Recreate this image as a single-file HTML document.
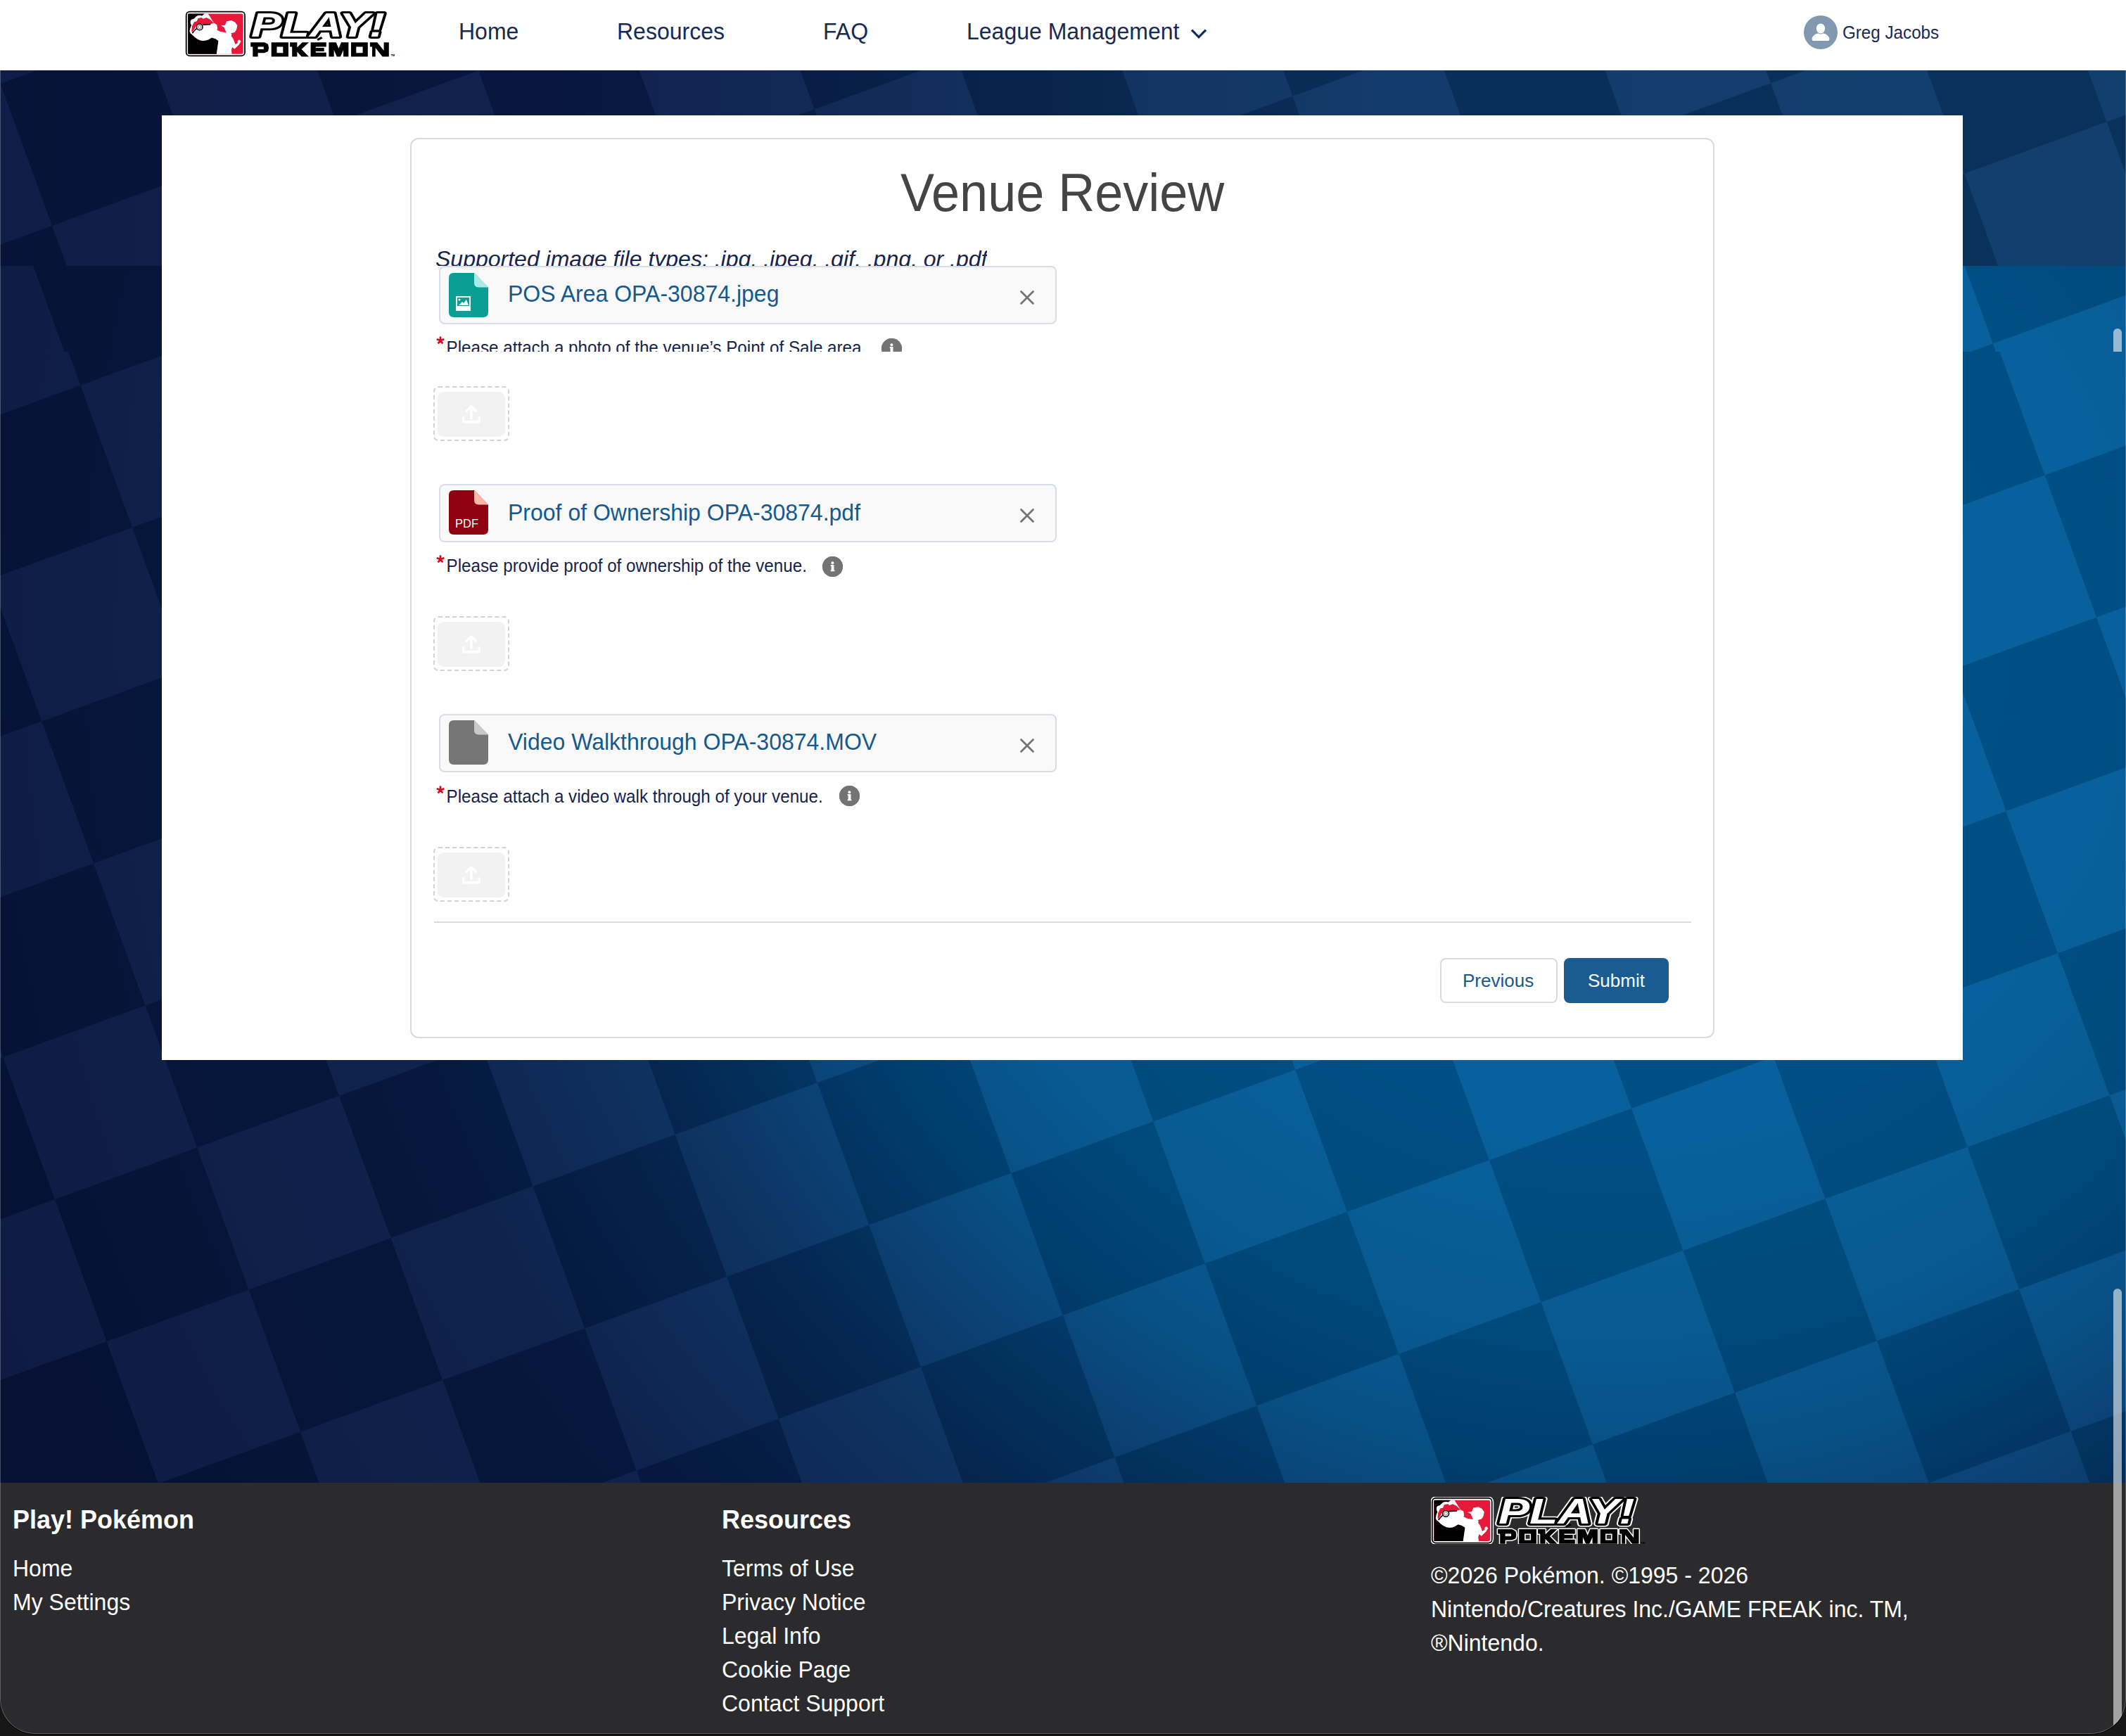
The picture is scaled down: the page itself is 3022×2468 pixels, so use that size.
<!DOCTYPE html>
<html><head><meta charset="utf-8">
<style>
*{margin:0;padding:0;box-sizing:border-box}
html,body{width:3022px;height:2468px;overflow:hidden;background:#171717}
body{position:relative;font-family:"Liberation Sans",sans-serif}
.abs{position:absolute}
#win{position:absolute;left:0;top:0;width:3022px;height:2465px;overflow:hidden;border-radius:0 0 50px 50px;background:#2b2b2d;box-shadow:0 1px 0 0 #000}
#hdr{position:absolute;left:0;top:0;width:3022px;height:100px;background:#fff}
.nav{position:absolute;top:21.3px;font-size:32px;color:#182a56;white-space:nowrap;line-height:48px}
#bgA{position:absolute;left:0;top:100px;width:3022px;height:278px;overflow:hidden;background:linear-gradient(90deg,#081640 0%,#0a1c4a 30%,#0b2b5a 50%,#0b3566 65%,#0a3a69 100%)}
#bgB{position:absolute;left:0;top:500px;width:3022px;height:1608px;overflow:hidden;background:radial-gradient(circle at 2300px 400px,#005d9b 0px,#005c9a 700px,#00558f 1000px,#00487f 1200px,#033e73 1300px,#062c5c 1500px,#071c48 1800px,#07143c 2500px)}
#bgC{position:absolute;left:0;top:378px;width:3022px;height:122px;overflow:hidden;background:radial-gradient(circle at 2300px 522px,#005d9b 0px,#005c9a 700px,#00558f 1000px,#00487f 1200px,#033e73 1300px,#062c5c 1500px,#071c48 1800px,#07143c 2500px)}
.chk{position:absolute;width:7310px;height:7310px;transform:rotate(-20deg);transform-origin:50% 50%;background-size:430px 430px;background-position:0 0}
.chk.p0{background-image:repeating-conic-gradient(rgba(255,255,255,.03) 0 25%,rgba(0,0,0,.14) 0 50%)}
.chk.p1{background-image:repeating-conic-gradient(rgba(0,0,0,.14) 0 25%,rgba(255,255,255,.03) 0 50%)}
#panel{position:absolute;left:230px;top:164px;width:2560px;height:1343px;background:#fff}
#card{position:absolute;left:583px;top:196px;width:1854px;height:1280px;border:2px solid #dddbda;border-radius:12px;background:#fff}
.t{position:absolute;white-space:nowrap;line-height:1}
.pill{position:absolute;left:624px;width:878px;height:83px;background:#f9f9f9;border:2px solid #d8dde6;border-radius:8px}
.fname{position:absolute;left:722px;font-size:32px;color:#16598f;white-space:nowrap;line-height:1}
.lbl{position:absolute;left:637px;font-size:24.2px;color:#16234d;white-space:nowrap;line-height:1}
.ast{position:absolute;left:620px;font-size:26px;color:#e3001b;line-height:1}
.info{position:absolute;width:29px;height:29px;border-radius:50%;background:#706e6b}
.up{position:absolute;left:616px;width:108px;height:78px;border:2px dashed #d6d2d0;border-radius:7px}
.up .in{position:absolute;left:4px;top:6px;width:96px;height:64px;background:#f2f2f2;border-radius:9px}
#foot{position:absolute;left:0;top:2108px;width:3022px;height:360px;background:#2b2b2d;color:#fff}
.fl{position:absolute;font-size:32px;color:#fff;white-space:nowrap;line-height:1}
.fname{transform:scaleY(1.05);transform-origin:0 29px}
.lbl{transform:scaleY(1.05);transform-origin:0 22px}
.nav{transform:scaleY(1.05);transform-origin:0 34.6px}
.fl{transform:scaleY(1.04);transform-origin:0 29px}
</style></head><body>
<div id="win">
  <div id="bgB"><div class="chk p0" style="left:-3577.4px;top:-2450.4px"></div></div>
  <div id="bgC"><div class="chk p0" style="left:-3577.4px;top:-2312.9px"></div></div>
  <div id="bgA"><div class="chk p1" style="left:-3581px;top:-3434px"></div></div>
  <div id="hdr">
    <svg class="abs" style="left:263px;top:15px" width="300" height="66" viewBox="0 0 300 66"><rect x="0.8" y="0.8" width="85.1" height="64.4" rx="6" fill="#000"/>
<rect x="2.6" y="2.6" width="81.6" height="60.8" rx="4" fill="#fff"/>
<rect x="4.2" y="4.6" width="78.4" height="57.2" rx="3" fill="#e8183a"/>
<polygon points="4.2,4.6 27.8,4.6 23.8,7.7 22.0,6.8 18.5,7.1 15.8,8.6 12.6,11.7 8.8,13.1 7.7,15.8 7.9,18.5 9.1,21.1 7.3,25.6 6.6,29.6 7.7,32.3 10.4,34.5 14.0,38.1 18.0,40.8 22.0,42.4 25.6,43.0 29.6,42.6 33.6,41.2 37.7,38.6 43.0,39.9 47.5,43.0 44.8,61.8 4.2,61.8" fill="#000"/>
<polygon points="27.8,4.6 32.8,4.6 41.0,17.6 45.3,20.2 46.2,25.6 45.5,27.8 50.6,30.1 58.7,31.4 56.4,26.0 55.5,23.8 51.1,21.4 56.9,20.7 59.1,15.3 66.3,14.0 71.2,16.7 74.3,21.1 73.4,26.0 72.5,28.3 70.3,31.0 65.4,32.3 66.3,34.1 65.8,36.3 68.5,39.9 71.6,47.9 74.8,46.2 74.8,43.0 77.0,41.2 79.7,43.5 76.5,48.8 70.3,54.7 67.2,52.0 65.8,56.4 66.7,61.8 44.8,61.8 47.5,43.0 43.0,39.9 37.7,38.6 33.6,41.2 29.6,42.6 25.6,43.0 22.0,42.4 18.0,40.8 14.0,38.1 10.4,34.5 7.7,32.3 6.6,29.6 7.3,25.6 9.1,21.1 7.9,18.5 7.7,15.8 8.8,13.1 12.6,11.7 15.8,8.6 18.5,7.1 22.0,6.8 23.8,7.7" fill="#fff"/>
<polygon points="9.3,29.6 10.0,22.0 13.1,16.2 16.7,15.3 18.5,10.9 23.8,10.0 25.6,11.7 30.5,10.0 35.4,12.6 41.0,17.6 36.3,19.3 25.6,19.8 20.2,18.5 15.8,22.0 10.4,31.0" fill="#e8183a"/>
<path d="M10.4 32.3Q14.0 27.4 17.1 25.2" stroke="#000" stroke-width="1.6" fill="none"/>
<path d="M24.7 20.2L36.3 19.6" stroke="#000" stroke-width="1.6" fill="none"/>
<circle cx="20.7" cy="23.4" r="4.3" fill="#fff" stroke="#000" stroke-width="1.5"/>
<circle cx="20.7" cy="23.4" r="2.2" fill="none" stroke="#000" stroke-width="0.5"/>
<path class="pok" d="M93.2 45.2 L112.9 45.2 L118.0 47.8 L119.1 52.9 L118.0 58.1 L112.9 60.2 L103.6 60.2 L103.6 65.4 L96.3 65.4 L96.3 51.4 L93.2 51.4Z M122.7 45.2 L147.0 45.2 L147.0 65.4 L122.7 65.4Z M149.1 45.2 L159.4 45.2 L159.4 52.4 L166.7 45.2 L176.0 45.2 L165.6 55.0 L176.0 65.4 L165.6 65.4 L159.4 58.6 L159.4 65.4 L152.2 65.4 L152.2 51.4 L149.1 51.4Z M178.6 45.2 L200.8 45.2 L200.8 51.4 L185.8 51.4 L185.8 52.9 L197.7 52.9 L197.7 58.1 L185.8 58.1 L185.8 59.7 L200.8 59.7 L200.8 65.4 L178.6 65.4Z M204.4 45.2 L214.8 45.2 L218.4 54.0 L222.0 45.2 L232.4 45.2 L232.4 65.4 L225.1 65.4 L225.1 56.1 L221.0 65.4 L215.8 65.4 L211.7 56.1 L211.7 65.4 L204.4 65.4Z M236.0 45.2 L259.8 45.2 L259.8 65.4 L236.0 65.4Z M262.9 45.2 L273.3 45.2 L282.6 57.1 L282.6 45.2 L289.8 45.2 L289.8 65.4 L280.5 65.4 L270.7 52.9 L270.7 65.4 L266.0 65.4 L266.0 51.4 L262.9 51.4Z M103.6 51.4 L111.8 51.4 L111.8 55.0 L103.6 55.0Z M130.5 51.4 L139.3 51.4 L139.3 60.2 L130.5 60.2Z M243.3 51.4 L252.6 51.4 L252.6 60.2 L243.3 60.2Z" fill="#000" fill-rule="evenodd"/>
<polygon points="187.4,40.5 193.6,36.9 195.7,39.5 188.9,43.1" fill="#000"/>
<text x="292.4" y="65.4" font-family="Liberation Sans" font-weight="bold" font-size="4" fill="#000">TM</text>
<text x="94" y="37" font-family="Liberation Sans" font-weight="bold" font-style="italic" font-size="48.5" textLength="190" lengthAdjust="spacingAndGlyphs" fill="#fff" stroke="#000" stroke-width="6" stroke-linejoin="round" paint-order="stroke">PLAY!</text></svg>
    <div class="nav" style="left:652px">Home</div>
    <div class="nav" style="left:877px">Resources</div>
    <div class="nav" style="left:1170px">FAQ</div>
    <div class="nav" style="left:1374px">League Management</div>
    <svg class="abs" style="left:1690px;top:38px" width="28" height="20" viewBox="0 0 28 20"><path d="M4 4.7L14 14.8L24 4.7" stroke="#16285a" stroke-width="3.2" fill="none"/></svg>
    <svg class="abs" style="left:2564px;top:22px" width="48" height="48" viewBox="0 0 48 48"><circle cx="24" cy="24" r="24" fill="#8298b0"/><ellipse cx="24" cy="18.5" rx="6.2" ry="7" fill="#fff"/><path d="M11.6 34Q11.6 29 17 26.5Q20 25 21 25.5Q24 27.5 27 25.5Q28 25 31 26.5Q36.4 29 36.4 34Q36.4 36 34.4 36H13.6Q11.6 36 11.6 34Z" fill="#fff"/></svg>
    <div class="nav" style="left:2619px;top:23px;font-size:24.2px">Greg Jacobs</div>
  </div>
  <div id="panel"></div>
  <div id="card"></div>
  <div class="t" style="left:1280px;top:238.5px;font-size:72px;color:#444;transform:scaleY(1.06);transform-origin:0 62px">Venue Review</div>
  
  <div class="t" style="left:619px;top:350px;height:28px;overflow:hidden;font-size:32px;font-style:italic;color:#16234d;line-height:36px">Supported image file types: .jpg, .jpeg, .gif, .png, or .pdf</div>

  <div class="pill" style="top:378px"></div>
  <svg class="abs" style="left:638px;top:388px" width="56" height="63" viewBox="0 0 56 63"><path d="M7 0H36L56 20.5V56Q56 63 49 63H7Q0 63 0 56V7Q0 0 7 0Z" fill="#0b9e94"/><path d="M36 0L56 20.5H42.5Q36 20.5 36 14Z" fill="#a8ede3"/><rect x="10" y="33" width="21" height="21" fill="#fff"/><rect x="12" y="35" width="17" height="12" fill="#0b9e94"/><circle cx="15" cy="38" r="1.5" fill="#fff"/><path d="M14 46L19 41L21 43L25 38L28 46Z" fill="#fff"/></svg>
  <div class="fname" style="top:402px">POS Area OPA-30874.jpeg</div>
  <svg class="abs" style="left:1448px;top:411px" width="24" height="24" viewBox="0 0 24 24"><path d="M3.5 3.5L20.5 20.5M20.5 3.5L3.5 20.5" stroke="#747474" stroke-width="2.8" stroke-linecap="round"/></svg>
  <div class="abs" style="left:600px;top:470px;width:800px;height:30px;overflow:hidden">
    <svg class="abs" style="left:19.0px;top:7.2px" width="14" height="14" viewBox="-7 -7 14 14"><path d="M0 0V-5.6M0 0L5.3 -1.7M0 0L3.3 4.5M0 0L-3.3 4.5M0 0L-5.3 -1.7" stroke="#e3001b" stroke-width="2.6"/></svg>
    <div class="lbl" style="left:34.6px;top:13px">Please attach a photo of the venue’s Point of Sale area</div>
    <div class="info" style="left:653px;top:11px"><svg width="29" height="29" viewBox="0 0 29 29" style="display:block"><circle cx="14.5" cy="14.5" r="14.5" fill="#737373"/><circle cx="14.4" cy="9.2" r="2" fill="#fff"/><path d="M11.8 12H16.5V19.3H17.3V21.2H11.8V19.3H12.6V14H11.8Z" fill="#fff"/></svg></div>
  </div>
  <div class="up" style="top:549px"><div class="in"><svg class="abs" style="left:0;top:0" width="96" height="64" viewBox="0 0 96 64"><path d="M36.7 36.7V42.7H59.1V36.7M47.9 37.6V21M41 27.6L47.9 21L54.8 27.6" stroke="#fff" stroke-width="3.4" fill="none" stroke-linecap="round" stroke-linejoin="round"/></svg></div></div>

  <div class="pill" style="top:688px"></div>
  <svg class="abs" style="left:638px;top:697px" width="56" height="63" viewBox="0 0 56 63"><path d="M7 0H36L56 20.5V56Q56 63 49 63H7Q0 63 0 56V7Q0 0 7 0Z" fill="#8f0010"/><path d="M36 0L56 20.5H42.5Q36 20.5 36 14Z" fill="#ffb8a8"/><text x="9" y="53" font-family="Liberation Sans" font-size="16.5" fill="#fff">PDF</text></svg>
  <div class="fname" style="top:712.5px">Proof of Ownership OPA-30874.pdf</div>
  <svg class="abs" style="left:1448px;top:721px" width="24" height="24" viewBox="0 0 24 24"><path d="M3.5 3.5L20.5 20.5M20.5 3.5L3.5 20.5" stroke="#747474" stroke-width="2.8" stroke-linecap="round"/></svg>
  <svg class="abs" style="left:619.0px;top:787.5px" width="14" height="14" viewBox="-7 -7 14 14"><path d="M0 0V-5.6M0 0L5.3 -1.7M0 0L3.3 4.5M0 0L-3.3 4.5M0 0L-5.3 -1.7" stroke="#e3001b" stroke-width="2.6"/></svg>
  <div class="lbl" style="left:634.6px;top:793px">Please provide proof of ownership of the venue.</div>
  <div class="info" style="left:1169px;top:791px"><svg width="29" height="29" viewBox="0 0 29 29" style="display:block"><circle cx="14.5" cy="14.5" r="14.5" fill="#737373"/><circle cx="14.4" cy="9.2" r="2" fill="#fff"/><path d="M11.8 12H16.5V19.3H17.3V21.2H11.8V19.3H12.6V14H11.8Z" fill="#fff"/></svg></div>
  <div class="up" style="top:876px"><div class="in"><svg class="abs" style="left:0;top:0" width="96" height="64" viewBox="0 0 96 64"><path d="M36.7 36.7V42.7H59.1V36.7M47.9 37.6V21M41 27.6L47.9 21L54.8 27.6" stroke="#fff" stroke-width="3.4" fill="none" stroke-linecap="round" stroke-linejoin="round"/></svg></div></div>

  <div class="pill" style="top:1014.5px"></div>
  <svg class="abs" style="left:638px;top:1024px" width="56" height="63" viewBox="0 0 56 63"><path d="M7 0H36L56 20.5V56Q56 63 49 63H7Q0 63 0 56V7Q0 0 7 0Z" fill="#767676"/><path d="M36 0L56 20.5H42.5Q36 20.5 36 14Z" fill="#c9c9c9"/></svg>
  <div class="fname" style="top:1039px">Video Walkthrough OPA-30874.MOV</div>
  <svg class="abs" style="left:1448px;top:1048px" width="24" height="24" viewBox="0 0 24 24"><path d="M3.5 3.5L20.5 20.5M20.5 3.5L3.5 20.5" stroke="#747474" stroke-width="2.8" stroke-linecap="round"/></svg>
  <svg class="abs" style="left:619.0px;top:1116.0px" width="14" height="14" viewBox="-7 -7 14 14"><path d="M0 0V-5.6M0 0L5.3 -1.7M0 0L3.3 4.5M0 0L-3.3 4.5M0 0L-5.3 -1.7" stroke="#e3001b" stroke-width="2.6"/></svg>
  <div class="lbl" style="left:634.6px;top:1120.5px">Please attach a video walk through of your venue.</div>
  <div class="info" style="left:1193px;top:1117px"><svg width="29" height="29" viewBox="0 0 29 29" style="display:block"><circle cx="14.5" cy="14.5" r="14.5" fill="#737373"/><circle cx="14.4" cy="9.2" r="2" fill="#fff"/><path d="M11.8 12H16.5V19.3H17.3V21.2H11.8V19.3H12.6V14H11.8Z" fill="#fff"/></svg></div>
  <div class="up" style="top:1204px"><div class="in"><svg class="abs" style="left:0;top:0" width="96" height="64" viewBox="0 0 96 64"><path d="M36.7 36.7V42.7H59.1V36.7M47.9 37.6V21M41 27.6L47.9 21L54.8 27.6" stroke="#fff" stroke-width="3.4" fill="none" stroke-linecap="round" stroke-linejoin="round"/></svg></div></div>

  <div class="abs" style="left:617px;top:1310px;width:1787px;height:2px;background:#dddbda"></div>
  <div class="abs" style="left:2047px;top:1362px;width:167px;height:64px;border:2px solid #dddbda;border-radius:8px;background:#fff"></div>
  <div class="t" style="left:2079px;top:1381px;font-size:26px;color:#16598f">Previous</div>
  <div class="abs" style="left:2223px;top:1362px;width:149px;height:64px;border-radius:8px;background:#1a5b91"></div>
  <div class="t" style="left:2257px;top:1381px;font-size:26px;color:#fff">Submit</div>
  <div id="foot">
    <svg class="abs" style="left:2033.6px;top:19.6px" width="306" height="67.3" viewBox="0 0 300 66"><text x="94" y="37" font-family="Liberation Sans" font-weight="bold" font-style="italic" font-size="48.5" textLength="190" lengthAdjust="spacingAndGlyphs" fill="#fff" stroke="#fff" stroke-width="9" stroke-linejoin="round">PLAY!</text><rect x="-0.7" y="-0.7" width="88.1" height="67.4" rx="7.5" fill="#fff"/><rect x="0.8" y="0.8" width="85.1" height="64.4" rx="6" fill="#000"/>
<rect x="2.6" y="2.6" width="81.6" height="60.8" rx="4" fill="#fff"/>
<rect x="4.2" y="4.6" width="78.4" height="57.2" rx="3" fill="#e8183a"/>
<polygon points="4.2,4.6 27.8,4.6 23.8,7.7 22.0,6.8 18.5,7.1 15.8,8.6 12.6,11.7 8.8,13.1 7.7,15.8 7.9,18.5 9.1,21.1 7.3,25.6 6.6,29.6 7.7,32.3 10.4,34.5 14.0,38.1 18.0,40.8 22.0,42.4 25.6,43.0 29.6,42.6 33.6,41.2 37.7,38.6 43.0,39.9 47.5,43.0 44.8,61.8 4.2,61.8" fill="#000"/>
<polygon points="27.8,4.6 32.8,4.6 41.0,17.6 45.3,20.2 46.2,25.6 45.5,27.8 50.6,30.1 58.7,31.4 56.4,26.0 55.5,23.8 51.1,21.4 56.9,20.7 59.1,15.3 66.3,14.0 71.2,16.7 74.3,21.1 73.4,26.0 72.5,28.3 70.3,31.0 65.4,32.3 66.3,34.1 65.8,36.3 68.5,39.9 71.6,47.9 74.8,46.2 74.8,43.0 77.0,41.2 79.7,43.5 76.5,48.8 70.3,54.7 67.2,52.0 65.8,56.4 66.7,61.8 44.8,61.8 47.5,43.0 43.0,39.9 37.7,38.6 33.6,41.2 29.6,42.6 25.6,43.0 22.0,42.4 18.0,40.8 14.0,38.1 10.4,34.5 7.7,32.3 6.6,29.6 7.3,25.6 9.1,21.1 7.9,18.5 7.7,15.8 8.8,13.1 12.6,11.7 15.8,8.6 18.5,7.1 22.0,6.8 23.8,7.7" fill="#fff"/>
<polygon points="9.3,29.6 10.0,22.0 13.1,16.2 16.7,15.3 18.5,10.9 23.8,10.0 25.6,11.7 30.5,10.0 35.4,12.6 41.0,17.6 36.3,19.3 25.6,19.8 20.2,18.5 15.8,22.0 10.4,31.0" fill="#e8183a"/>
<path d="M10.4 32.3Q14.0 27.4 17.1 25.2" stroke="#000" stroke-width="1.6" fill="none"/>
<path d="M24.7 20.2L36.3 19.6" stroke="#000" stroke-width="1.6" fill="none"/>
<circle cx="20.7" cy="23.4" r="4.3" fill="#fff" stroke="#000" stroke-width="1.5"/>
<circle cx="20.7" cy="23.4" r="2.2" fill="none" stroke="#000" stroke-width="0.5"/>
<path class="pok" stroke="#fff" stroke-width="3" stroke-linejoin="round" paint-order="stroke" d="M93.2 45.2 L112.9 45.2 L118.0 47.8 L119.1 52.9 L118.0 58.1 L112.9 60.2 L103.6 60.2 L103.6 65.4 L96.3 65.4 L96.3 51.4 L93.2 51.4Z M122.7 45.2 L147.0 45.2 L147.0 65.4 L122.7 65.4Z M149.1 45.2 L159.4 45.2 L159.4 52.4 L166.7 45.2 L176.0 45.2 L165.6 55.0 L176.0 65.4 L165.6 65.4 L159.4 58.6 L159.4 65.4 L152.2 65.4 L152.2 51.4 L149.1 51.4Z M178.6 45.2 L200.8 45.2 L200.8 51.4 L185.8 51.4 L185.8 52.9 L197.7 52.9 L197.7 58.1 L185.8 58.1 L185.8 59.7 L200.8 59.7 L200.8 65.4 L178.6 65.4Z M204.4 45.2 L214.8 45.2 L218.4 54.0 L222.0 45.2 L232.4 45.2 L232.4 65.4 L225.1 65.4 L225.1 56.1 L221.0 65.4 L215.8 65.4 L211.7 56.1 L211.7 65.4 L204.4 65.4Z M236.0 45.2 L259.8 45.2 L259.8 65.4 L236.0 65.4Z M262.9 45.2 L273.3 45.2 L282.6 57.1 L282.6 45.2 L289.8 45.2 L289.8 65.4 L280.5 65.4 L270.7 52.9 L270.7 65.4 L266.0 65.4 L266.0 51.4 L262.9 51.4Z M103.6 51.4 L111.8 51.4 L111.8 55.0 L103.6 55.0Z M130.5 51.4 L139.3 51.4 L139.3 60.2 L130.5 60.2Z M243.3 51.4 L252.6 51.4 L252.6 60.2 L243.3 60.2Z" fill="#000" fill-rule="evenodd"/>
<polygon points="187.4,40.5 193.6,36.9 195.7,39.5 188.9,43.1" fill="#000"/>
<text x="292.4" y="65.4" font-family="Liberation Sans" font-weight="bold" font-size="4" fill="#000">TM</text>
<text x="94" y="37" font-family="Liberation Sans" font-weight="bold" font-style="italic" font-size="48.5" textLength="190" lengthAdjust="spacingAndGlyphs" fill="#fff" stroke="#000" stroke-width="6" stroke-linejoin="round" paint-order="stroke">PLAY!</text></svg>
    <div class="fl" style="left:18px;top:35px;font-size:36px;font-weight:bold">Play! Pokémon</div>
    <div class="fl" style="left:18px;top:105.5px">Home</div>
    <div class="fl" style="left:18px;top:153.5px">My Settings</div>
    <div class="fl" style="left:1026px;top:35px;font-size:36px;font-weight:bold">Resources</div>
    <div class="fl" style="left:1026px;top:105.5px">Terms of Use</div>
    <div class="fl" style="left:1026px;top:153.5px">Privacy Notice</div>
    <div class="fl" style="left:1026px;top:201.5px">Legal Info</div>
    <div class="fl" style="left:1026px;top:249.5px">Cookie Page</div>
    <div class="fl" style="left:1026px;top:297.5px">Contact Support</div>
    <div class="fl" style="left:2034px;top:116px">©2026 Pokémon. ©1995 - 2026</div>
    <div class="fl" style="left:2034px;top:164px">Nintendo/Creatures Inc./GAME FREAK inc. TM,</div>
    <div class="fl" style="left:2034px;top:212px">®Nintendo.</div>
  </div>
  <div class="abs" style="left:3004px;top:467px;width:12px;height:33px;border-radius:6px 6px 0 0;background:rgba(255,255,255,.57)"></div>
  <div class="abs" style="left:3004px;top:1832px;width:12px;height:700px;border-radius:6px;background:rgba(255,255,255,.57)"></div>
  <div class="abs" style="left:0;top:0;width:3022px;height:2465px;border-radius:0 0 50px 50px;border:1.5px solid rgba(255,255,255,.25);border-top:none;pointer-events:none"></div>
</div>
</body></html>
